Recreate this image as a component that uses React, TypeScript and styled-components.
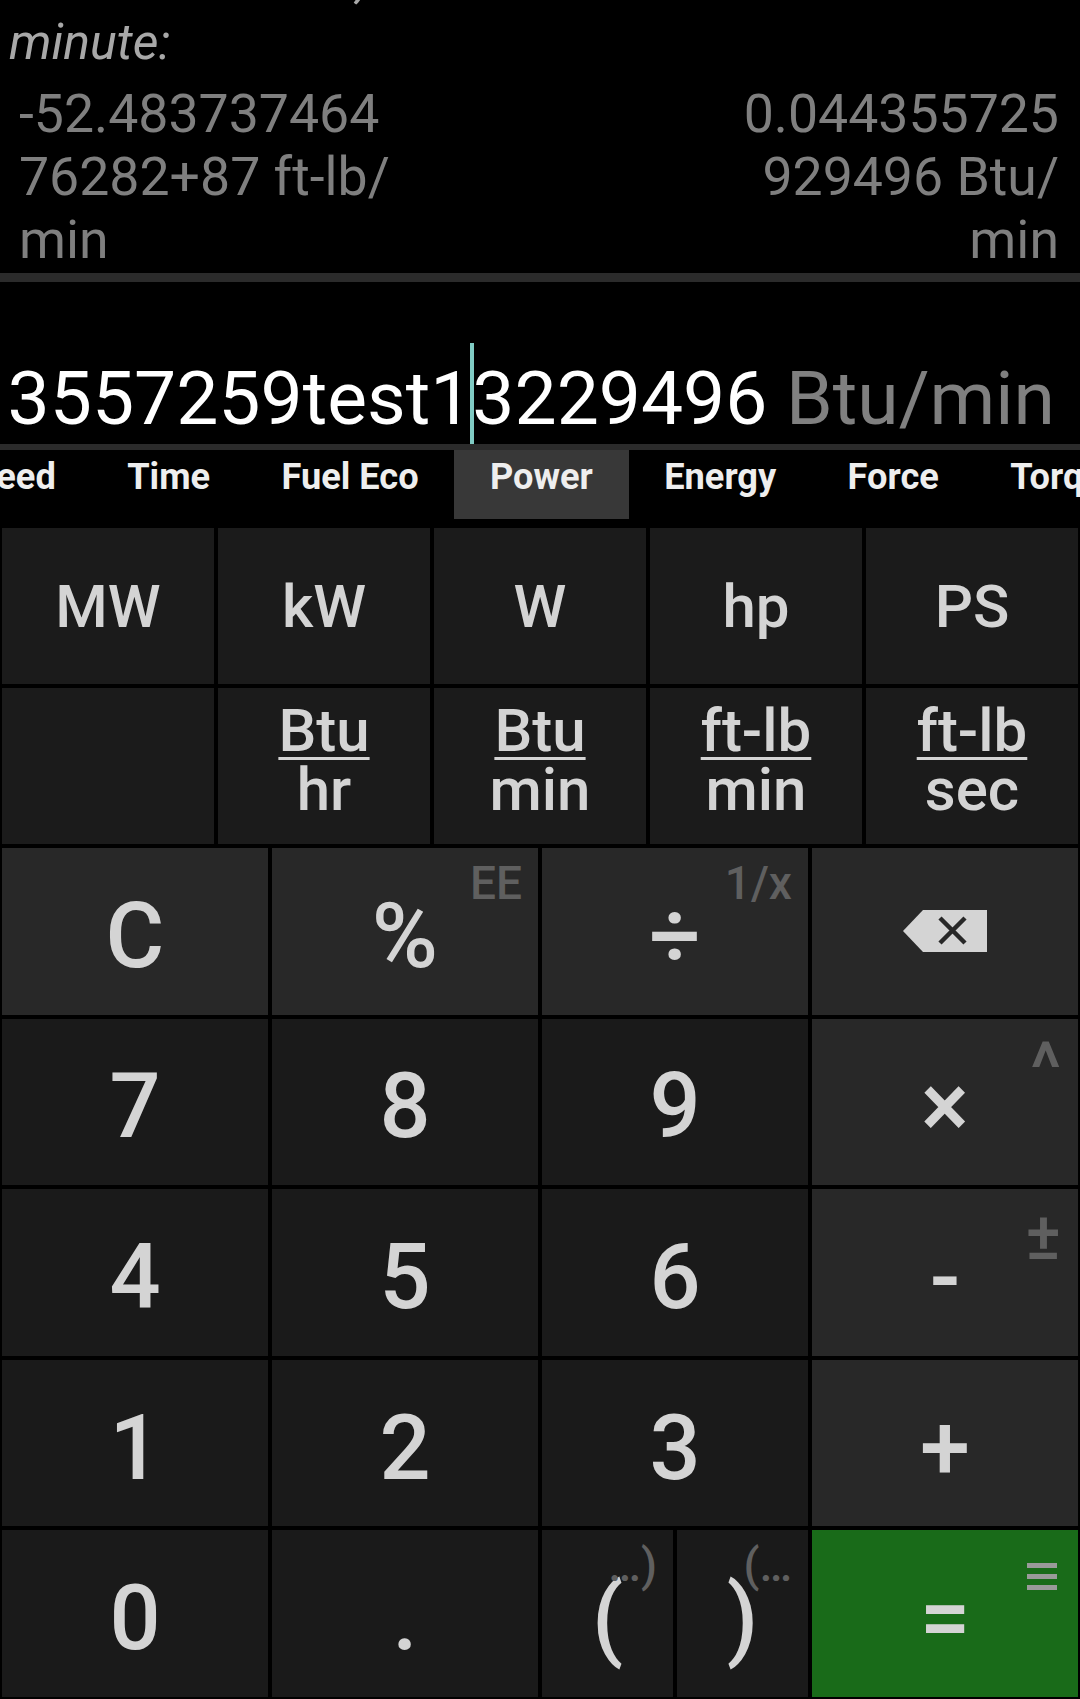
import React from "react"
import styled, { createGlobalStyle } from "styled-components"

const GlobalStyle = createGlobalStyle`
  html, body {
    margin: 0;
    padding: 0;
    background: #000;
  }
  body {
    font-family: Roboto, "Liberation Sans", sans-serif;
  }
  * {
    box-sizing: border-box;
  }
`

type Tone = "digit" | "op" | "equals"

const toneBg: Record<Tone, string> = {
  digit: "#1a1a1a",
  op: "#282828",
  equals: "#196b19",
}

const Screen = styled.div`
  width: 1080px;
  height: 1699px;
  overflow: hidden;
  background: #000;
  display: flex;
  flex-direction: column;
`

const ResultPanel = styled.section`
  height: 273px;
  flex-shrink: 0;
  overflow: hidden;
`

const Caption = styled.p`
  margin: -51px 0 0;
  padding: 0 9px;
  font-size: 50px;
  line-height: 62px;
  font-style: italic;
  color: #a8a8a8;
  white-space: nowrap;
`

const ResultRow = styled.div`
  display: flex;
  justify-content: space-between;
  margin-top: 9px;
  padding: 0 21px 0 19px;
`

const ResultText = styled.div<{ $align: "left" | "right" }>`
  font-size: 53.6px;
  line-height: 63px;
  color: #7f7f7f;
  text-align: ${(p) => p.$align};
  white-space: nowrap;
`

const Divider = styled.div<{ $h: number }>`
  height: ${(p) => p.$h}px;
  flex-shrink: 0;
  background: #2b2b2b;
`

const InputArea = styled.div`
  height: 162px;
  flex-shrink: 0;
  display: flex;
  align-items: flex-end;
  justify-content: flex-end;
  padding-right: 25px;
  overflow: hidden;
`

const Expression = styled.div`
  font-size: 75px;
  line-height: 1;
  color: #fff;
  white-space: nowrap;
`

const UnitSuffix = styled.span`
  color: #808080;
`

const Cursor = styled.span`
  display: inline-block;
  width: 4px;
  height: 101px;
  margin: 0 -2px;
  vertical-align: -20px;
  background: #80cbc4;
`

const TabStrip = styled.nav`
  height: 70px;
  flex-shrink: 0;
  display: flex;
  overflow: hidden;
`

const TabTrack = styled.div`
  display: flex;
  margin-left: -82px;
`

const Tab = styled.div<{ $active?: boolean }>`
  flex-shrink: 0;
  height: 69px;
  padding: 7px 35.7px 0;
  font-size: 36.2px;
  line-height: 40px;
  font-weight: 700;
  color: #eeeeee;
  white-space: nowrap;
  background: ${(p) => (p.$active ? "#383838" : "transparent")};
`

const Keys = styled.div`
  flex: 1;
  display: flex;
  flex-direction: column;
  gap: 4px;
  padding: 8px 2px 2px;
`

const UnitGrid = styled.div`
  display: grid;
  grid-template-columns: repeat(5, 1fr);
  grid-auto-rows: 156px;
  gap: 4px;
`

const UnitKey = styled.button`
  border: none;
  margin: 0;
  padding: 0;
  background: #1b1b1b;
  color: #d4d4d4;
  font-family: inherit;
  font-size: 60px;
  font-weight: 500;
  display: flex;
  align-items: center;
  justify-content: center;
`

const Fraction = styled.span`
  display: flex;
  flex-direction: column;
  align-items: center;
  line-height: 59px;
  padding-bottom: 12px;
`

const Numerator = styled.span`
  text-decoration: underline;
  text-decoration-thickness: 3px;
  text-underline-offset: 6px;
`

const Keypad = styled.div`
  flex: 1;
  display: grid;
  grid-template-columns: repeat(4, 1fr);
  grid-template-rows: repeat(5, 1fr);
  gap: 4px;
`

const Key = styled.button<{ $tone: Tone }>`
  position: relative;
  border: none;
  margin: 0;
  padding: 10px 0 0;
  background: ${(p) => toneBg[p.$tone]};
  color: #d4d4d4;
  font-family: inherit;
  font-size: 90px;
  font-weight: 500;
  display: flex;
  align-items: center;
  justify-content: center;
`

const ParenPair = styled.div`
  display: grid;
  grid-template-columns: 1fr 1fr;
  gap: 4px;
`

// small secondary label in the top right corner of a key
const Alt = styled.span<{ $size?: number; $top?: number; $right?: number }>`
  position: absolute;
  top: ${(p) => p.$top ?? 12}px;
  right: ${(p) => p.$right ?? 16}px;
  font-size: ${(p) => p.$size ?? 46}px;
  line-height: 1;
  font-weight: 500;
  color: #5f5f5f;
`

const AltBars = styled.span`
  position: absolute;
  top: 33px;
  right: 21px;
  display: flex;
  color: #9a9a9a;
`

const IconSlot = styled.span`
  display: flex;
  margin-top: -10px;
`

const BackspaceIcon = () => (
  <svg width="84" height="42" viewBox="0 0 84 42">
    <path d="M0 21 L20 0 H84 V42 H20 Z" fill="#d4d4d4" />
    <path d="M37 8 L62 33 M62 8 L37 33" stroke="#282828" strokeWidth="4.5" />
  </svg>
)

const MenuBars = () => (
  <svg width="30" height="27" viewBox="0 0 30 27">
    <rect x="0" y="0" width="30" height="5" fill="currentColor" />
    <rect x="0" y="11" width="30" height="5" fill="currentColor" />
    <rect x="0" y="22" width="30" height="5" fill="currentColor" />
  </svg>
)

const tabs = ["Speed", "Time", "Fuel Eco", "Power", "Energy", "Force", "Torque"]

const units: { top: string; bottom?: string }[] = [
  { top: "MW" },
  { top: "kW" },
  { top: "W" },
  { top: "hp" },
  { top: "PS" },
  { top: "" },
  { top: "Btu", bottom: "hr" },
  { top: "Btu", bottom: "min" },
  { top: "ft-lb", bottom: "min" },
  { top: "ft-lb", bottom: "sec" },
]

const leftLines = ["-52.483737464", "76282+87 ft-lb/", "min"]
const rightLines = ["0.044355725", "929496 Btu/", "min"]

const App = (): JSX.Element => {
  return (
    <>
      <GlobalStyle />
      <Screen>
        <ResultPanel>
          <Caption>
            Converted value, each
            <br />
            minute:
          </Caption>
          <ResultRow>
            <ResultText $align="left">
              {leftLines.map((l) => (
                <div key={l}>{l}</div>
              ))}
            </ResultText>
            <ResultText $align="right">
              {rightLines.map((l) => (
                <div key={l}>{l}</div>
              ))}
            </ResultText>
          </ResultRow>
        </ResultPanel>
        <Divider $h={9} />
        <InputArea>
          <Expression>
            3557259test1
            <Cursor />
            3229496 <UnitSuffix>Btu/min</UnitSuffix>
          </Expression>
        </InputArea>
        <Divider $h={6} />
        <TabStrip>
          <TabTrack>
            {tabs.map((t) => (
              <Tab key={t} $active={t === "Power"}>
                {t}
              </Tab>
            ))}
          </TabTrack>
        </TabStrip>
        <Keys>
          <UnitGrid>
            {units.map((u, i) => (
              <UnitKey key={i}>
                {u.bottom ? (
                  <Fraction>
                    <Numerator>{u.top}</Numerator>
                    <span>{u.bottom}</span>
                  </Fraction>
                ) : (
                  u.top
                )}
              </UnitKey>
            ))}
          </UnitGrid>
          <Keypad>
            <Key $tone="op">C</Key>
            <Key $tone="op">
              %<Alt>EE</Alt>
            </Key>
            <Key $tone="op">
              ÷<Alt>1/x</Alt>
            </Key>
            <Key $tone="op">
              <IconSlot>
                <BackspaceIcon />
              </IconSlot>
            </Key>

            <Key $tone="digit">7</Key>
            <Key $tone="digit">8</Key>
            <Key $tone="digit">9</Key>
            <Key $tone="op">
              ×
              <Alt $size={72} $top={14} $right={17}>
                ^
              </Alt>
            </Key>

            <Key $tone="digit">4</Key>
            <Key $tone="digit">5</Key>
            <Key $tone="digit">6</Key>
            <Key $tone="op">
              -
              <Alt $size={66} $top={15} $right={17}>
                ±
              </Alt>
            </Key>

            <Key $tone="digit">1</Key>
            <Key $tone="digit">2</Key>
            <Key $tone="digit">3</Key>
            <Key $tone="op">+</Key>

            <Key $tone="digit">0</Key>
            <Key $tone="digit">.</Key>
            <ParenPair>
              <Key $tone="digit">
                (<Alt>…)</Alt>
              </Key>
              <Key $tone="digit">
                )<Alt>(…</Alt>
              </Key>
            </ParenPair>
            <Key $tone="equals">
              =
              <AltBars>
                <MenuBars />
              </AltBars>
            </Key>
          </Keypad>
        </Keys>
      </Screen>
    </>
  )
}

export default App
